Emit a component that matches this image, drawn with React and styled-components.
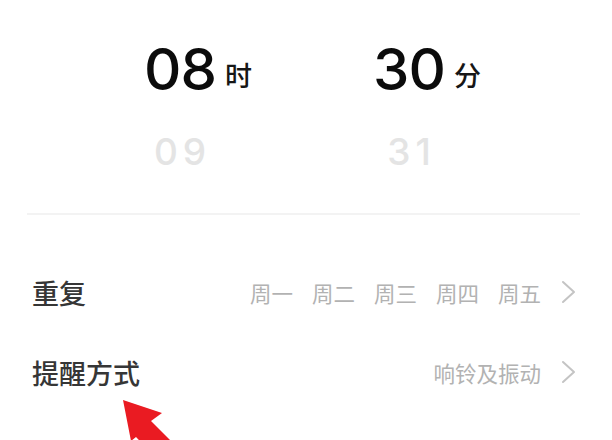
import React from 'react'
import styled, { createGlobalStyle } from 'styled-components'

const Global = createGlobalStyle`
    html, body {
        margin: 0;
        padding: 0;
        background: #fff;
        overflow: hidden;
    }
    body {
        font-family: "Noto Sans", "Noto Sans CJK SC", sans-serif;
    }
`

const Page = styled.div`
    position: relative;
    width: 612px;
    height: 440px;
    overflow: hidden;
    background: #fff;
`

const Picker = styled.div`
    display: flex;
    gap: 89px;
    padding: 34px 0 0 110px;
    height: 180px;
    box-sizing: border-box;
`

const Wheel = styled.div`
    width: 140px;
    display: flex;
    flex-direction: column;
    align-items: center;
`

const Current = styled.div`
    position: relative;
    font-family: "Inter", "Noto Sans", sans-serif;
    font-weight: 500;
    font-size: 58px;
    line-height: 70px;
    height: 70px;
    color: #0b0b0b;
    letter-spacing: -1px;
`

const Unit = styled.span`
    position: absolute;
    left: 100%;
    bottom: 16px;
    margin-left: 9px;
    font-family: "Noto Sans CJK SC", sans-serif;
    font-size: 27px;
    line-height: 27px;
    font-weight: 500;
    color: #161616;
    white-space: nowrap;
`

const Next = styled.div`
    margin-top: 28px;
    font-family: "Inter", "Noto Sans", sans-serif;
    font-size: 37px;
    line-height: 40px;
    font-weight: 500;
    color: #e4e4e4;
    letter-spacing: 5px;
    padding-left: 5px;
`

const Divider = styled.div`
    height: 2px;
    background: #f3f3f3;
    margin: 33px 32px 0 27px;
`

const List = styled.div`
    margin-top: 37px;
    display: flex;
    flex-direction: column;
`

const Row = styled.div`
    height: 80px;
    display: flex;
    align-items: center;
    justify-content: space-between;
    padding: 0 36px 0 32px;
`

const Label = styled.div`
    font-family: "Noto Sans CJK SC", sans-serif;
    font-size: 27px;
    font-weight: 500;
    color: #363636;
`

const Value = styled.div`
    display: flex;
    align-items: center;
    gap: 20px;
    font-family: "Noto Sans CJK SC", sans-serif;
    font-size: 21.5px;
    color: #b2b2b2;
`

const Days = styled.div`
    display: flex;
    gap: 19px;
`

const Overlay = styled.svg`
    position: absolute;
    left: 0;
    top: 0;
    pointer-events: none;
`

function Chevron() {
    return (
        <svg width="15" height="24" viewBox="0 0 15 24">
            <path d="M2 2 L13 12 L2 22" fill="none" stroke="#c4c4c4" strokeWidth="2" strokeLinecap="round" strokeLinejoin="round" />
        </svg>
    )
}

const days = ['周一', '周二', '周三', '周四', '周五']

export default function App() {
    return (
        <Page>
            <Global />
            <Picker>
                <Wheel>
                    <Current>08<Unit>时</Unit></Current>
                    <Next>09</Next>
                </Wheel>
                <Wheel>
                    <Current>30<Unit>分</Unit></Current>
                    <Next>31</Next>
                </Wheel>
            </Picker>
            <Divider />
            <List>
                <Row>
                    <Label>重复</Label>
                    <Value>
                        <Days>{days.map(d => <span key={d}>{d}</span>)}</Days>
                        <Chevron />
                    </Value>
                </Row>
                <Row>
                    <Label>提醒方式</Label>
                    <Value>
                        <span>响铃及振动</span>
                        <Chevron />
                    </Value>
                </Row>
                <Row>
                    <Label>标签</Label>
                    <Value />
                </Row>
            </List>
            <Overlay width="612" height="440" viewBox="0 0 612 440">
                <polygon points="123,400 162,413 151,421 182,452 166,468 136,437 131,441" fill="#ea1b22" />
            </Overlay>
        </Page>
    )
}
